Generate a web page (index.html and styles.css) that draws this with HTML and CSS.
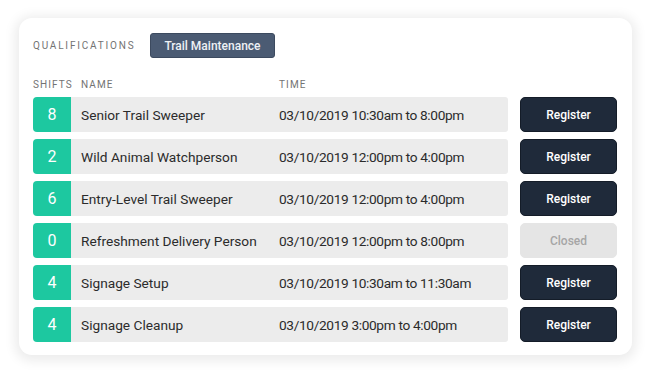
FILE: index.html
```html
<!doctype html>
<html lang="en">
  <head>
    <meta charset="UTF-8" />
    <meta name="viewport" content="width=device-width, initial-scale=1.0" />
    <title>Shifts</title>
    <link rel="stylesheet" href="styles.css">
  </head>
  <body>
    <div class="card">
      <div class="quals">
        <span class="label">Qualifications</span>
        <span class="badge">Trail Maintenance</span>
      </div>

      <div class="head">
        <span>Shifts</span>
        <span>Name</span>
        <span>Time</span>
      </div>

      <div class="rows">
        <div class="row">
          <div class="count">8</div>
          <div class="slot">
            <span class="name">Senior Trail Sweeper</span>
            <span class="time">03/10/2019 10:30am to 8:00pm</span>
          </div>
          <button class="btn">Register</button>
        </div>
        <div class="row">
          <div class="count">2</div>
          <div class="slot">
            <span class="name">Wild Animal Watchperson</span>
            <span class="time">03/10/2019 12:00pm to 4:00pm</span>
          </div>
          <button class="btn">Register</button>
        </div>
        <div class="row">
          <div class="count">6</div>
          <div class="slot">
            <span class="name">Entry-Level Trail Sweeper</span>
            <span class="time">03/10/2019 12:00pm to 4:00pm</span>
          </div>
          <button class="btn">Register</button>
        </div>
        <div class="row">
          <div class="count">0</div>
          <div class="slot">
            <span class="name">Refreshment Delivery Person</span>
            <span class="time">03/10/2019 12:00pm to 8:00pm</span>
          </div>
          <button class="btn closed" disabled>Closed</button>
        </div>
        <div class="row">
          <div class="count">4</div>
          <div class="slot">
            <span class="name">Signage Setup</span>
            <span class="time">03/10/2019 10:30am to 11:30am</span>
          </div>
          <button class="btn">Register</button>
        </div>
        <div class="row">
          <div class="count">4</div>
          <div class="slot">
            <span class="name">Signage Cleanup</span>
            <span class="time">03/10/2019 3:00pm to 4:00pm</span>
          </div>
          <button class="btn">Register</button>
        </div>
      </div>
    </div>
  </body>
</html>
```

FILE: styles.css
```css
* {
  box-sizing: border-box;
}

body {
  margin: 0;
  padding: 18px 18px 19px 19px;
  background: #fff;
  font-family: Roboto, "Liberation Sans", sans-serif;
  color: #2b2b2b;
}

.card {
  width: 613px;
  height: 337px;
  padding: 15px 15px 13px 14px;
  background: #fff;
  border-radius: 13px;
  box-shadow: 0 2px 12px 4px rgba(0, 0, 0, 0.08);
}

.quals {
  display: flex;
  align-items: center;
  gap: 15px;
}

.label {
  font-size: 10px;
  letter-spacing: 1.8px;
  text-transform: uppercase;
  color: #737373;
}

.badge {
  display: inline-flex;
  align-items: center;
  height: 25px;
  padding: 0 13px;
  background: #4b5b73;
  border: 1px solid #3c4a5f;
  border-radius: 3px;
  color: #eef1f5;
  font-size: 12px;
  font-weight: 500;
}

.head {
  display: grid;
  grid-template-columns: 48px 198px 1fr;
  margin-top: 21px;
  font-size: 10px;
  line-height: 12px;
  letter-spacing: 1.1px;
  text-transform: uppercase;
  color: #737373;
}

.rows {
  display: flex;
  flex-direction: column;
  gap: 7px;
  margin-top: 6px;
}

.row {
  display: flex;
  height: 35px;
}

.count {
  display: flex;
  align-items: center;
  justify-content: center;
  width: 38px;
  background: #1dc8a0;
  border-radius: 4px 0 0 4px;
  color: #fff;
  font-size: 16px;
}

.slot {
  flex: 1;
  display: grid;
  grid-template-columns: 198px 1fr;
  align-items: center;
  padding-left: 10px;
  background: #ececec;
  border-radius: 0 3px 3px 0;
  font-size: 13.7px;
}

.time {
  letter-spacing: -0.35px;
}

.btn {
  width: 97px;
  margin-left: 12px;
  background: #1f2a3a;
  border: 1px solid #141c28;
  border-radius: 5px;
  color: #fff;
  font-family: inherit;
  font-size: 12px;
  font-weight: 500;
  cursor: pointer;
}

.btn.closed {
  background: #e5e5e5;
  border-color: #e5e5e5;
  color: #a6a6a6;
  cursor: default;
}
```
